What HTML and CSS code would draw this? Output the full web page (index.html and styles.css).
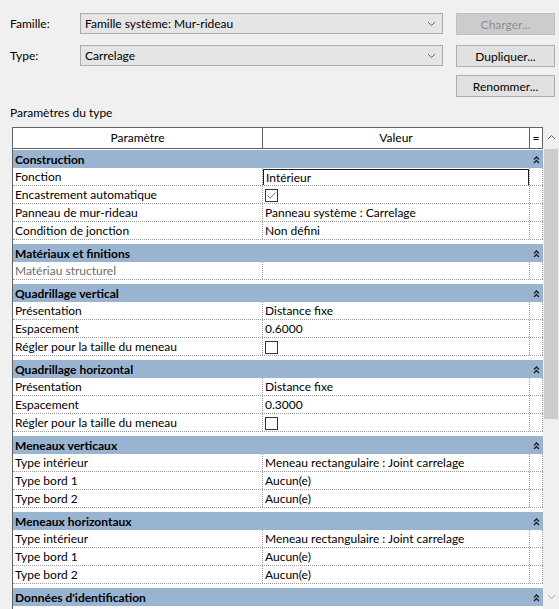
FILE: index.html
```html
<!DOCTYPE html>
<html lang="fr">
<head>
    <meta charset="UTF-8">
    <title>Propriétés du type</title>
    <link rel="stylesheet" href="styles.css">
</head>
<body>
    <div class="type-form">
        <label class="field-label">Famille:</label>
        <div class="combo">
            <span>Famille système: Mur-rideau</span>
            <svg class="combo-arrow" width="9" height="6" viewBox="0 0 9 6"><polyline points="1,1 4.5,4.5 8,1" fill="none" stroke="#606060" stroke-width="1"/></svg>
        </div>
        <button class="btn" disabled>Charger...</button>

        <label class="field-label">Type:</label>
        <div class="combo">
            <span>Carrelage</span>
            <svg class="combo-arrow" width="9" height="6" viewBox="0 0 9 6"><polyline points="1,1 4.5,4.5 8,1" fill="none" stroke="#606060" stroke-width="1"/></svg>
        </div>
        <button class="btn">Dupliquer...</button>

        <span></span>
        <span></span>
        <button class="btn">Renommer...</button>
    </div>

    <div class="caption">Paramètres du type</div>

    <div class="grid-wrap">
        <div class="prop-grid">
            <div class="grid-head">
                <div class="c1">Paramètre</div>
                <div class="c2">Valeur</div>
                <div class="c3">=</div>
            </div>

            <div class="group first">
                <div class="band"><span>Construction</span><svg class="collapse" width="7" height="9" viewBox="0 0 7 9"><polyline points="1,4.5 3.5,2 6,4.5" /><polyline points="1,8 3.5,5.5 6,8" /></svg></div>
                <div class="row"><div class="c1">Fonction</div><div class="c2"><span class="edit-box">Intérieur</span></div><div class="c3"></div></div>
                <div class="row"><div class="c1">Encastrement automatique</div><div class="c2"><span class="checkbox"><svg width="11" height="11" viewBox="0 0 11 11"><polyline points="1.5,5.5 4.2,8.2 9.5,2.5" fill="none" stroke="#707070" stroke-width="1"/></svg></span></div><div class="c3"></div></div>
                <div class="row"><div class="c1">Panneau de mur-rideau</div><div class="c2">Panneau système : Carrelage</div><div class="c3"></div></div>
                <div class="row"><div class="c1">Condition de jonction</div><div class="c2">Non défini</div><div class="c3"></div></div>
            </div>

            <div class="group">
                <div class="band"><span>Matériaux et finitions</span><svg class="collapse" width="7" height="9" viewBox="0 0 7 9"><polyline points="1,4.5 3.5,2 6,4.5" /><polyline points="1,8 3.5,5.5 6,8" /></svg></div>
                <div class="row"><div class="c1 disabled">Matériau structurel</div><div class="c2"></div><div class="c3"></div></div>
            </div>

            <div class="group">
                <div class="band"><span>Quadrillage vertical</span><svg class="collapse" width="7" height="9" viewBox="0 0 7 9"><polyline points="1,4.5 3.5,2 6,4.5" /><polyline points="1,8 3.5,5.5 6,8" /></svg></div>
                <div class="row"><div class="c1">Présentation</div><div class="c2">Distance fixe</div><div class="c3"></div></div>
                <div class="row"><div class="c1">Espacement</div><div class="c2">0.6000</div><div class="c3"></div></div>
                <div class="row"><div class="c1">Régler pour la taille du meneau</div><div class="c2"><span class="checkbox"></span></div><div class="c3"></div></div>
            </div>

            <div class="group">
                <div class="band"><span>Quadrillage horizontal</span><svg class="collapse" width="7" height="9" viewBox="0 0 7 9"><polyline points="1,4.5 3.5,2 6,4.5" /><polyline points="1,8 3.5,5.5 6,8" /></svg></div>
                <div class="row"><div class="c1">Présentation</div><div class="c2">Distance fixe</div><div class="c3"></div></div>
                <div class="row"><div class="c1">Espacement</div><div class="c2">0.3000</div><div class="c3"></div></div>
                <div class="row"><div class="c1">Régler pour la taille du meneau</div><div class="c2"><span class="checkbox"></span></div><div class="c3"></div></div>
            </div>

            <div class="group">
                <div class="band"><span>Meneaux verticaux</span><svg class="collapse" width="7" height="9" viewBox="0 0 7 9"><polyline points="1,4.5 3.5,2 6,4.5" /><polyline points="1,8 3.5,5.5 6,8" /></svg></div>
                <div class="row"><div class="c1">Type intérieur</div><div class="c2">Meneau rectangulaire : Joint carrelage</div><div class="c3"></div></div>
                <div class="row"><div class="c1">Type bord 1</div><div class="c2">Aucun(e)</div><div class="c3"></div></div>
                <div class="row"><div class="c1">Type bord 2</div><div class="c2">Aucun(e)</div><div class="c3"></div></div>
            </div>

            <div class="group">
                <div class="band"><span>Meneaux horizontaux</span><svg class="collapse" width="7" height="9" viewBox="0 0 7 9"><polyline points="1,4.5 3.5,2 6,4.5" /><polyline points="1,8 3.5,5.5 6,8" /></svg></div>
                <div class="row"><div class="c1">Type intérieur</div><div class="c2">Meneau rectangulaire : Joint carrelage</div><div class="c3"></div></div>
                <div class="row"><div class="c1">Type bord 1</div><div class="c2">Aucun(e)</div><div class="c3"></div></div>
                <div class="row"><div class="c1">Type bord 2</div><div class="c2">Aucun(e)</div><div class="c3"></div></div>
            </div>

            <div class="group">
                <div class="band"><span>Données d'identification</span><svg class="collapse" width="7" height="9" viewBox="0 0 7 9"><polyline points="1,4.5 3.5,2 6,4.5" /><polyline points="1,8 3.5,5.5 6,8" /></svg></div>
            </div>
        </div>

        <div class="scrollbar">
            <div class="sb-btn">
                <svg width="9" height="6" viewBox="0 0 9 6"><polyline points="1,5 4.5,1.5 8,5" fill="none" stroke="#606060" stroke-width="1"/></svg>
            </div>
            <div class="sb-thumb"></div>
            <div class="sb-track"></div>
            <div class="sb-btn">
                <svg width="9" height="6" viewBox="0 0 9 6"><polyline points="1,1 4.5,4.5 8,1" fill="none" stroke="#a6a6a6" stroke-width="1"/></svg>
            </div>
        </div>
    </div>
</body>
</html>
```

FILE: styles.css
```css
html, body {
    margin: 0;
    height: 609px;
    overflow: hidden;
}
body {
    background-color: #f0f0f0;
    font-family: Lato, "Noto Sans", sans-serif;
    font-size: 12px;
    color: #000;
}

/* top form: famille / type / buttons */
.type-form {
    display: grid;
    grid-template-columns: 57px 363px 99px;
    grid-template-rows: 32px 30px 22px;
    column-gap: 13px;
    align-items: start;
    padding: 13px 0 0 10px;
}
.field-label {
    line-height: 21px;
}
.combo {
    display: flex;
    align-items: center;
    justify-content: space-between;
    box-sizing: border-box;
    height: 21px;
    padding: 0 6px 0 4px;
    background-color: #e5e5e5;
    border: 1px solid #acacac;
}
.combo-arrow {
    display: block;
}
.btn {
    box-sizing: border-box;
    height: 22px;
    padding: 0;
    font-family: inherit;
    font-size: 12px;
    color: #000;
    background-color: #e1e1e1;
    border: 1px solid #adadad;
}
.btn:disabled {
    color: #8c8c8c;
    background-color: #cccccc;
    border-color: #bfbfbf;
}

.caption {
    margin: 8px 0 0 10px;
    line-height: 16px;
}

/* property grid */
.grid-wrap {
    display: flex;
    margin: 6px 0 0 12px;
    height: 482px;
    overflow: hidden;
}
.prop-grid {
    width: 531px;
    flex: none;
    border-left: 1px solid #646464;
    background-color: #fff;
    box-sizing: border-box;
}
.c1 {
    width: 250px;
}
.c2 {
    width: 267px;
}
.c3 {
    width: 13px;
}
.c1, .c2, .c3 {
    box-sizing: border-box;
    flex: none;
    white-space: nowrap;
    overflow: hidden;
}
.grid-head {
    display: flex;
    height: 22px;
    box-sizing: border-box;
    border-top: 1px solid #646464;
    border-bottom: 1px solid #646464;
    line-height: 20px;
    text-align: center;
}
.grid-head .c1,
.grid-head .c2,
.grid-head .c3 {
    border-right: 1px solid #646464;
}
.group {
    margin-top: 4px;
}
.group.first {
    margin-top: 1px;
}
.band {
    display: flex;
    align-items: center;
    justify-content: space-between;
    height: 18px;
    padding: 0 3px 0 2px;
    background-color: #99b4d1;
    font-weight: bold;
}
.collapse {
    display: block;
    fill: none;
    stroke: #1e1e1e;
    stroke-width: 1.3;
}
.row {
    display: flex;
    height: 18px;
    box-sizing: border-box;
    border-bottom: 1px dotted #9a9a9a;
    line-height: 17px;
}
.row .c1,
.row .c2,
.row .c3 {
    border-right: 1px dotted #9a9a9a;
}
.row .c1 {
    padding-left: 2px;
}
.row .c2 {
    padding-left: 2px;
}
.disabled {
    color: #6d6d6d;
}
.edit-box {
    display: block;
    height: 17px;
    margin: 1px 0 0 -2px;
    padding-left: 2px;
    box-sizing: border-box;
    border: 1px solid #1e1e1e;
    line-height: 15px;
}
.checkbox {
    display: inline-flex;
    align-items: center;
    justify-content: center;
    width: 13px;
    height: 13px;
    box-sizing: border-box;
    margin-top: 3px;
    vertical-align: top;
    border: 1px solid #333;
    background-color: #fff;
}

/* scrollbar */
.scrollbar {
    flex: 1;
    display: flex;
    flex-direction: column;
    background-color: #f0f0f0;
}
.sb-btn {
    display: flex;
    align-items: center;
    justify-content: center;
    height: 20px;
    flex: none;
}
.sb-thumb {
    height: 270px;
    margin: 2px 1px 0 1px;
    background-color: #cdcdcd;
}
.sb-track {
    flex: 1;
}
.sb-btn:last-child {
    margin-bottom: 2px;
}
```
